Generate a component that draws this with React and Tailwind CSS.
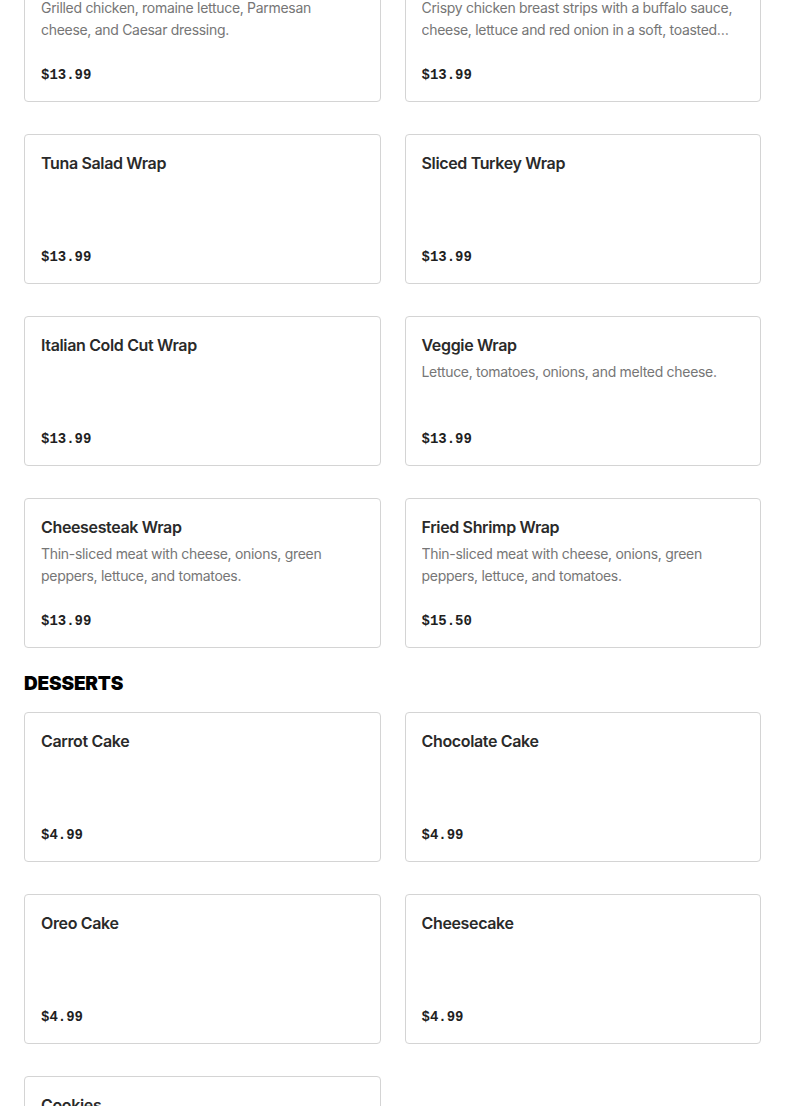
import React from "react";

const wraps = [
  { name: "Chicken Caesar Wrap", desc: "Grilled chicken, romaine lettuce, Parmesan cheese, and Caesar dressing.", price: "$13.99" },
  { name: "Buffalo Chicken Wrap", desc: "Crispy chicken breast strips with a buffalo sauce, cheese, lettuce and red onion in a soft, toasted tortilla wrap.", price: "$13.99" },
  { name: "Tuna Salad Wrap", desc: "", price: "$13.99" },
  { name: "Sliced Turkey Wrap", desc: "", price: "$13.99" },
  { name: "Italian Cold Cut Wrap", desc: "", price: "$13.99" },
  { name: "Veggie Wrap", desc: "Lettuce, tomatoes, onions, and melted cheese.", price: "$13.99" },
  { name: "Cheesesteak Wrap", desc: "Thin-sliced meat with cheese, onions, green peppers, lettuce, and tomatoes.", price: "$13.99" },
  { name: "Fried Shrimp Wrap", desc: "Thin-sliced meat with cheese, onions, green peppers, lettuce, and tomatoes.", price: "$15.50" },
];

const desserts = [
  { name: "Carrot Cake", desc: "", price: "$4.99" },
  { name: "Chocolate Cake", desc: "", price: "$4.99" },
  { name: "Oreo Cake", desc: "", price: "$4.99" },
  { name: "Cheesecake", desc: "", price: "$4.99" },
  { name: "Cookies", desc: "", price: "$4.99" },
];

function Card({ item }) {
  return (
    <div className="h-[150px] border border-[#d4d4d4] rounded-[4px] bg-white p-4 flex flex-col justify-between">
      <div>
        <div className="text-[16px] leading-[24px] font-semibold text-[#2a2a2a] tracking-[-0.35px]">{item.name}</div>
        {item.desc && (
          <div className="mt-1 text-[14px] leading-[22px] text-[#767676] tracking-[-0.3px] line-clamp-2">{item.desc}</div>
        )}
      </div>
      <div
        className="text-[14px] leading-[20px] font-bold text-[#1f1f1f]"
        style={{ fontFamily: '"Liberation Mono", "DejaVu Sans Mono", monospace' }}
      >
        {item.price}
      </div>
    </div>
  );
}

export default function App() {
  return (
    <div className="bg-white min-h-screen overflow-hidden" style={{ fontFamily: 'Inter, "Noto Sans", sans-serif' }}>
      <div className="px-6 -mt-[48px]">
        <div className="grid grid-cols-2 gap-x-6 gap-y-8">
          {wraps.map((w) => (
            <Card key={w.name} item={w} />
          ))}
        </div>
        <h2 className="mt-6 mb-4 text-[19px] leading-[24px] font-black text-black tracking-[-0.2px] uppercase">Desserts</h2>
        <div className="grid grid-cols-2 gap-x-6 gap-y-8">
          {desserts.map((d) => (
            <Card key={d.name} item={d} />
          ))}
        </div>
      </div>
    </div>
  );
}
